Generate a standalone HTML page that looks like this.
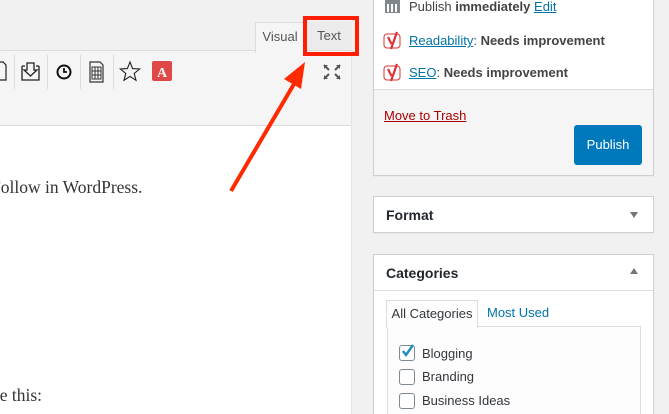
<!DOCTYPE html>
<html style="overflow:hidden;width:669px;height:414px"><head><style>
body{margin:0;width:669px;height:414px;overflow:hidden;background:#f1f1f1;font-family:"Liberation Sans",sans-serif;position:relative;font-size:13px;color:#23282d}
.a{position:absolute}
.box{background:#fff;border:1px solid #ccd0d4;box-shadow:0 1px 1px rgba(0,0,0,.04)}
a{color:#0073aa}
.cb{position:absolute;left:399px;width:14px;height:14px;border:1px solid #7e8993;border-radius:3px;background:#fff}
</style></head><body>
<div class="a" style="left:-1px;top:50px;width:352px;height:364px;background:#fff;border-right:1px solid #e2e4e7"></div>
<div class="a" style="left:-1px;top:50px;width:352px;height:74px;background:#f5f5f5;border-bottom:1px solid #dcdcde;border-top:1px solid #dcdcde"></div>
<div class="a" style="left:255px;top:22px;width:48px;height:30px;background:#f5f5f5;border:1px solid #dcdcde;border-bottom:none;font-size:13px;color:#555;text-align:center;line-height:28px">Visual</div>
<div class="a" style="left:306px;top:22px;width:46px;height:28px;background:#ebebeb;color:#555;text-align:center;line-height:28px">Text</div>
<div class="a" style="left:303px;top:16px;width:48px;height:32px;border:4px solid #ff1e00"></div>
<div class="a" style="left:14px;top:55px;width:1px;height:34px;background:#ddd"></div>
<div class="a" style="left:47px;top:55px;width:1px;height:34px;background:#ddd"></div>
<div class="a" style="left:80px;top:55px;width:1px;height:34px;background:#ddd"></div>
<div class="a" style="left:113px;top:55px;width:1px;height:34px;background:#ddd"></div>
<svg class="a" style="left:0;top:58px" width="200" height="30" viewBox="0 0 200 30">
<path d="M-2 4h5l3 3v15h-8" fill="none" stroke="#222" stroke-width="1.2"/>
<path d="M22 8h3M36 8h3M22 8v14h17V8M27 5h7v7h3l-6.5 6-6.5-6h3z" fill="none" stroke="#222" stroke-width="1.3"/>
<circle cx="64" cy="14" r="6.5" fill="none" stroke="#111" stroke-width="2"/><path d="M64 10v4h3" fill="none" stroke="#111" stroke-width="1.8"/>
<path d="M90 4h10l3 3v17H90z" fill="none" stroke="#333" stroke-width="1.2"/><path d="M92 9h9v12h-9zM92 13h9M92 17h9M95 9v12M98 9v12" fill="none" stroke="#333" stroke-width="1"/>
<path d="M130 4l2.6 6.6 7 .4-5.4 4.4 1.8 6.9-6-3.9-6 3.9 1.8-6.9-5.4-4.4 7-.4z" fill="none" stroke="#222" stroke-width="1.1"/>
<rect x="152" y="3" width="20" height="20" rx="2" fill="#e04848"/><text x="162" y="19" font-family="Liberation Serif" font-weight="bold" font-size="14" fill="#fff" text-anchor="middle">A</text>
</svg>
<svg class="a" style="left:323px;top:64px" width="18" height="16" viewBox="0 0 18 16"><path d="M1 1l5 5M17 1l-5 5M1 15l5-5M17 15l-5-5" stroke="#555" stroke-width="2"/><path d="M1 1h4L1 5zM17 1h-4l4 4zM1 15h4l-4-4zM17 15h-4l4-4z" fill="#555"/></svg>
<div class="a" style="left:-9px;top:177px;font-family:'Liberation Serif',serif;font-size:17.5px;color:#333">Follow in WordPress.</div>
<div class="a" style="left:-9px;top:385px;font-family:'Liberation Serif',serif;font-size:17.5px;color:#333">ke this:</div>
<svg class="a" style="left:0;top:0" width="360" height="200"><line x1="231" y1="191" x2="294" y2="84" stroke="#ff2a00" stroke-width="4"/><path d="M305 62l-21 17 17 10z" fill="#ff2a00"/></svg>
<div class="a box" style="left:373px;top:-2px;width:279px;height:177px;background:#f5f5f5;border-top:none"></div>
<div class="a" style="left:374px;top:-2px;width:279px;height:91px;background:#fff;border-bottom:1px solid #ddd"></div>
<svg class="a" style="left:384px;top:-2px" width="18" height="16"><rect x="1" y="1" width="15" height="14" fill="#82878c"/><rect x="3" y="6" width="2" height="8" fill="#fff"/><rect x="7" y="6" width="2" height="8" fill="#fff"/><rect x="11" y="6" width="2" height="8" fill="#fff"/></svg>
<div class="a" style="left:409px;top:-1px;color:#444">Publish <b>immediately</b> <a href="#">Edit</a></div>
<svg class="a" style="left:383px;top:31px" width="20" height="19"><rect x="1" y="3" width="16" height="14" rx="3" fill="none" stroke="#dc3232" stroke-width="1"/><path d="M5 6l3.5 7M14 1l-6 17" stroke="#dc3232" stroke-width="2.2" fill="none"/></svg>
<div class="a" style="left:409px;top:33px;color:#444"><a href="#">Readability</a>: <b>Needs improvement</b></div>
<svg class="a" style="left:383px;top:63px" width="20" height="19"><rect x="1" y="3" width="16" height="14" rx="3" fill="none" stroke="#dc3232" stroke-width="1"/><path d="M5 6l3.5 7M14 1l-6 17" stroke="#dc3232" stroke-width="2.2" fill="none"/></svg>
<div class="a" style="left:409px;top:65px;color:#444"><a href="#">SEO</a>: <b>Needs improvement</b></div>
<div class="a" style="left:384px;top:108px;font-size:13px"><a href="#" style="color:#a00">Move to Trash</a></div>
<div class="a" style="left:574px;top:125px;width:68px;height:40px;background:#0079bc;border-radius:3px;color:#fff;text-align:center;line-height:40px;font-size:13px">Publish</div>
<div class="a box" style="left:373px;top:196px;width:279px;height:35px"></div>
<div class="a" style="left:386px;top:207px;font-weight:bold;font-size:14px">Format</div>
<div class="a" style="left:630px;top:212px;border-left:4px solid transparent;border-right:4px solid transparent;border-top:6px solid #72777c"></div>
<div class="a box" style="left:373px;top:254px;width:279px;height:160px;border-bottom:none"></div>
<div class="a" style="left:374px;top:290px;width:279px;height:1px;background:#ddd"></div>
<div class="a" style="left:386px;top:265px;font-weight:bold;font-size:14px">Categories</div>
<div class="a" style="left:630px;top:268px;border-left:4px solid transparent;border-right:4px solid transparent;border-bottom:6px solid #72777c"></div>
<div class="a" style="left:387px;top:326px;width:252px;height:88px;border:1px solid #ddd;border-bottom:none;background:#fdfdfd"></div>
<div class="a" style="left:386px;top:300px;width:90px;height:27px;border:1px solid #ddd;border-bottom:none;background:#fdfdfd;color:#32373c;text-align:center;line-height:25px">All Categories</div>
<div class="a" style="left:487px;top:305px;color:#0073aa">Most Used</div>
<div class="cb" style="top:345px"></div>
<svg class="a" style="left:400px;top:343px" width="16" height="16"><path d="M3 8l3 4 7-10" stroke="#1e8cbe" stroke-width="2.4" fill="none"/></svg>
<div class="a" style="left:422px;top:346px;color:#32373c">Blogging</div>
<div class="cb" style="top:369px"></div>
<div class="a" style="left:422px;top:369px;color:#32373c">Branding</div>
<div class="cb" style="top:393px"></div>
<div class="a" style="left:422px;top:393px;color:#32373c">Business Ideas</div>
</body></html>
